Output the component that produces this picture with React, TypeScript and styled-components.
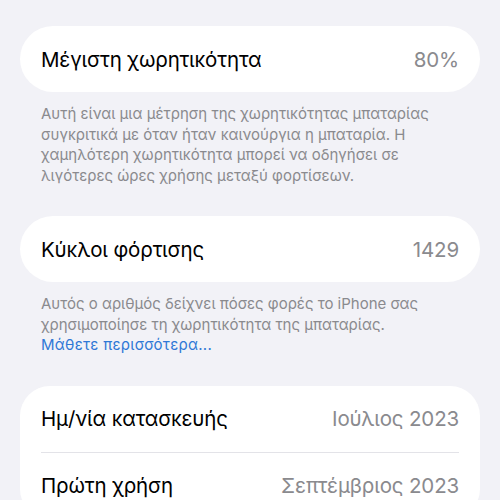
import React from "react";
import styled, { createGlobalStyle } from "styled-components";

const GlobalStyle = createGlobalStyle`
  html, body {
    margin: 0;
    padding: 0;
    background: #f2f2f7;
  }
  body {
    font-family: Inter, "Noto Sans", sans-serif;
    -webkit-font-smoothing: antialiased;
  }
`;

const Page = styled.div`
  padding: 26px 20px 0;
  width: 500px;
  height: 500px;
  box-sizing: border-box;
  overflow: hidden;
`;

const Card = styled.div<{ $radius?: number }>`
  background: #ffffff;
  border-radius: ${(p) => p.$radius ?? 33}px;
  overflow: hidden;
`;

const Row = styled.div`
  display: flex;
  align-items: center;
  justify-content: space-between;
  height: 66px;
  padding: 0 21px;
  font-size: 20.5px;
  letter-spacing: -0.15px;
`;

const Label = styled.span`
  color: #000000;
`;

const Value = styled.span`
  color: #8a8a8e;
`;

const Divider = styled.div`
  height: 1px;
  margin: 0 21px;
  background: #e3e3e8;
`;

const Footer = styled.p`
  margin: 12px 0 30px;
  padding: 0 21px;
  font-size: 15px;
  line-height: 20.5px;
  color: #8a8a8e;
`;

const Link = styled.span`
  color: #2f78d6;
  letter-spacing: 0.3px;
`;

const App = () => {
  return (
    <>
      <GlobalStyle />
      <Page>
        <Card>
          <Row>
            <Label>Μέγιστη χωρητικότητα</Label>
            <Value>80%</Value>
          </Row>
        </Card>
        <Footer>
          Αυτή είναι μια μέτρηση της χωρητικότητας μπαταρίας
          <br />
          συγκριτικά με όταν ήταν καινούργια η μπαταρία. Η
          <br />
          χαμηλότερη χωρητικότητα μπορεί να οδηγήσει σε
          <br />
          λιγότερες ώρες χρήσης μεταξύ φορτίσεων.
        </Footer>
        <Card>
          <Row>
            <Label>Κύκλοι φόρτισης</Label>
            <Value>1429</Value>
          </Row>
        </Card>
        <Footer>
          Αυτός ο αριθμός δείχνει πόσες φορές το iPhone σας
          <br />
          χρησιμοποίησε τη χωρητικότητα της μπαταρίας.
          <br />
          <Link>Μάθετε περισσότερα...</Link>
        </Footer>
        <Card $radius={30}>
          <Row>
            <Label>Ημ/νία κατασκευής</Label>
            <Value>Ιούλιος 2023</Value>
          </Row>
          <Divider />
          <Row>
            <Label>Πρώτη χρήση</Label>
            <Value>Σεπτέμβριος 2023</Value>
          </Row>
        </Card>
      </Page>
    </>
  );
};

export default App;
